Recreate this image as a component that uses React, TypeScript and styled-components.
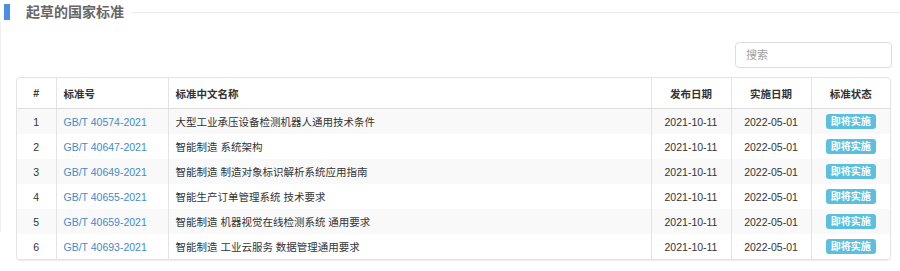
import React from 'react'
import styled, { createGlobalStyle } from 'styled-components'

const GlobalStyle = createGlobalStyle`
  body {
    margin: 0;
    background: #fff;
    font-family: "Liberation Sans", "Noto Sans CJK SC", sans-serif;
  }
`

const rows = [
	{ code: 'GB/T 40574-2021', name: '大型工业承压设备检测机器人通用技术条件' },
	{ code: 'GB/T 40647-2021', name: '智能制造 系统架构' },
	{ code: 'GB/T 40649-2021', name: '智能制造 制造对象标识解析系统应用指南' },
	{ code: 'GB/T 40655-2021', name: '智能生产订单管理系统 技术要求' },
	{ code: 'GB/T 40659-2021', name: '智能制造 机器视觉在线检测系统 通用要求' },
	{ code: 'GB/T 40693-2021', name: '智能制造 工业云服务 数据管理通用要求' },
]

const App = () => {
	return (
		<Page>
			<GlobalStyle/>
			<TitleRow>
				<TitleMark/>
				<TitleText>起草的国家标准</TitleText>
				<TitleLine/>
			</TitleRow>
			<Body>
				<Rail/>
				<Content>
					<Toolbar>
						<SearchInput placeholder='搜索'/>
					</Toolbar>
					<TableBox>
						<Table>
							<colgroup>
								<col style={{ width: 39 }}/>
								<col style={{ width: 112 }}/>
								<col style={{ width: 483 }}/>
								<col style={{ width: 80 }}/>
								<col style={{ width: 80 }}/>
								<col style={{ width: 79 }}/>
							</colgroup>
							<thead>
								<tr>
									<Th $align='center'>#</Th>
									<Th>标准号</Th>
									<Th>标准中文名称</Th>
									<Th $align='center'>发布日期</Th>
									<Th $align='center'>实施日期</Th>
									<Th $align='center'>标准状态</Th>
								</tr>
							</thead>
							<tbody>
								{ rows.map((r, i) => (
									<Tr key={ r.code } $striped={ i % 2 === 0 }>
										<Td $align='center'>{ i + 1 }</Td>
										<Td><Link>{ r.code }</Link></Td>
										<Td>{ r.name }</Td>
										<Td $align='center'>2021-10-11</Td>
										<Td $align='center'>2022-05-01</Td>
										<Td $align='center'><Badge>即将实施</Badge></Td>
									</Tr>
								)) }
							</tbody>
						</Table>
					</TableBox>
				</Content>
			</Body>
		</Page>
	)
}

export default App

const Page = styled.div`
  width: 900px;
  height: 271px;
  overflow: hidden;
`

const TitleRow = styled.div`
  display: flex;
  align-items: center;
  height: 24px;
  padding-left: 4px;
`

const TitleMark = styled.span`
  width: 6px;
  height: 16px;
  background: #4a90e2;
`

const TitleText = styled.h3`
  margin: 0 0 0 16px;
  font-size: 14px;
  font-weight: bold;
  color: #666;
  line-height: 20px;
`

const TitleLine = styled.span`
  flex: 1;
  height: 1px;
  margin-left: 7px;
  background: #eaeaea;
`

const Body = styled.div`
  display: flex;
  align-items: flex-start;
`

const Rail = styled.div`
  width: 3px;
  height: 210px;
  margin-top: -2px;
  background: #eeeeee;
`

const Content = styled.div`
  flex: 1;
  padding: 18px 9px 0 15px;
`

const Toolbar = styled.div`
  display: flex;
  justify-content: flex-end;
  margin-bottom: 9px;
`

const SearchInput = styled.input`
  box-sizing: border-box;
  width: 157px;
  height: 26px;
  margin-right: -1px;
  padding: 0 10px;
  border: 1px solid #dddddd;
  border-radius: 4px;
  font-family: "Liberation Sans", "Noto Sans CJK SC", sans-serif;
  font-size: 11px;
  outline: none;
  &::placeholder {
    color: #a0a0a0;
  }
`

const TableBox = styled.div`
  border: 1px solid #e3e3e3;
  border-radius: 4px;
  box-shadow: 0 1px 1px rgba(0, 0, 0, 0.08);
  overflow: hidden;
`

const Table = styled.table`
  width: 100%;
  border-collapse: collapse;
  table-layout: fixed;
  font-size: 10.5px;
  color: #333;
`

const Th = styled.th<{ $align?: string }>`
  height: 30px;
  padding: 0 7px;
  text-align: ${ p => p.$align || 'left' };
  font-weight: bold;
  border-left: 1px solid #e3e3e3;
  border-bottom: 1px solid #dddddd;
  &:first-child {
    border-left: none;
  }
`

const Tr = styled.tr<{ $striped: boolean }>`
  background: ${ p => p.$striped ? '#f9f9f9' : '#fff' };
  & + & td {
    border-top: 1px solid #dddddd;
  }
`

const Td = styled.td<{ $align?: string }>`
  height: 25px;
  padding: 0 7px;
  text-align: ${ p => p.$align || 'left' };
  border-left: 1px solid #e3e3e3;
  white-space: nowrap;
  &:first-child {
    border-left: none;
  }
`

const Link = styled.a`
  color: #428bca;
  text-decoration: none;
  cursor: pointer;
`

const Badge = styled.span`
  display: inline-block;
  padding: 2px 5px;
  border-radius: 3px;
  background: #5bc0de;
  color: #fff;
  font-size: 10px;
  font-weight: bold;
  line-height: 11px;
`
